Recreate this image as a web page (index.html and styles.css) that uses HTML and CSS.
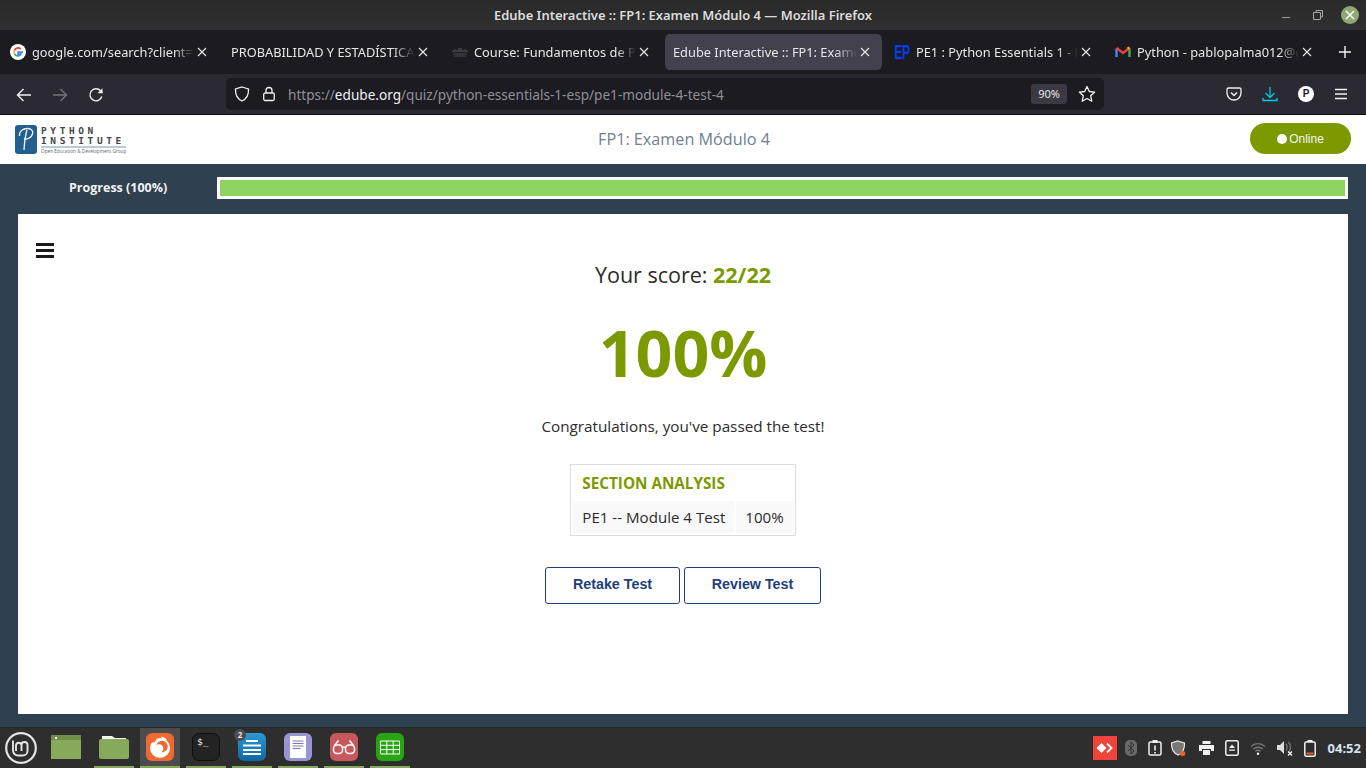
FILE: index.html
```html
<!DOCTYPE html>
<html lang="es">
<head>
    <meta charset="UTF-8">
    <title>Edube Interactive :: FP1: Examen Módulo 4</title>
    <link rel="stylesheet" href="styles.css">
</head>
<body>
    <!-- ventana del navegador -->
    <div class="titlebar">
        <span class="window-title">Edube Interactive :: FP1: Examen Módulo 4 — Mozilla Firefox</span>
        <div class="window-buttons">
            <svg class="win-min" width="10" height="10" viewBox="0 0 10 10"><path d="M1 7.500h8" stroke="#9a9a9a" stroke-width="1"/></svg>
            <svg class="win-max" width="12" height="12" viewBox="0 0 12 12"><path d="M1.500 3.500h7v7h-7zM4 3.500V1.500h6.500v6.500H8.500" fill="none" stroke="#a5a5a5" stroke-width="1"/></svg>
            <div class="win-close"><svg width="12" height="12" viewBox="0 0 12 12"><path d="M2 2l8 8M10 2l-8 8" stroke="#fff" stroke-width="1.500"/></svg></div>
        </div>
    </div>

    <div class="tabbar">
        <div class="tab">
            <svg class="favicon" width="16" height="16" viewBox="0 0 16 16"><circle cx="8" cy="8" r="8" fill="#fff"/><path d="M13 8.200H8.100v1.900h2.800c-.4 1.200-1.500 1.900-2.800 1.900" fill="none" stroke="#4285f4" stroke-width="1.700"/><path d="M8.100 12a4 4 0 0 1-3.700-2.500" fill="none" stroke="#34a853" stroke-width="1.700"/><path d="M4.400 9.500a4 4 0 0 1 0-3" fill="none" stroke="#fbbc05" stroke-width="1.700"/><path d="M4.400 6.500A4 4 0 0 1 10.800 5" fill="none" stroke="#ea4335" stroke-width="1.700"/></svg>
            <span class="tab-title">google.com/search?client=f</span>
            <svg class="tab-close" width="10" height="10" viewBox="0 0 10 10"><path d="M1 1l8 8M9 1l-8 8" stroke="#e8e8e8" stroke-width="1.100"/></svg>
        </div>
        <div class="tab">
            <span class="tab-title">PROBABILIDAD Y ESTADÍSTICA</span>
            <svg class="tab-close" width="10" height="10" viewBox="0 0 10 10"><path d="M1 1l8 8M9 1l-8 8" stroke="#e8e8e8" stroke-width="1.100"/></svg>
        </div>
        <div class="tab">
            <svg class="favicon" width="16" height="16" viewBox="0 0 16 16"><path d="M1 6v2M3 5v3M5 6v2M7 4v4M9 4v4M11 6v2M13 5v3M15 6v2" stroke="#5c5c60" stroke-width="1"/><path d="M1 10h14M2 12h12" stroke="#4c4c50" stroke-width="1.200"/></svg>
            <span class="tab-title">Course: Fundamentos de Py</span>
            <svg class="tab-close" width="10" height="10" viewBox="0 0 10 10"><path d="M1 1l8 8M9 1l-8 8" stroke="#e8e8e8" stroke-width="1.100"/></svg>
        </div>
        <div class="tab tab-active">
            <span class="tab-title">Edube Interactive :: FP1: Exame</span>
            <svg class="tab-close" width="10" height="10" viewBox="0 0 10 10"><path d="M1 1l8 8M9 1l-8 8" stroke="#e8e8e8" stroke-width="1.100"/></svg>
        </div>
        <div class="tab">
            <span class="favicon ep-icon">EP</span>
            <span class="tab-title">PE1 : Python Essentials 1 - M</span>
            <svg class="tab-close" width="10" height="10" viewBox="0 0 10 10"><path d="M1 1l8 8M9 1l-8 8" stroke="#e8e8e8" stroke-width="1.100"/></svg>
        </div>
        <div class="tab">
            <svg class="favicon" width="16" height="16" viewBox="0 0 16 16"><path d="M1.500 13V4.500" stroke="#4285f4" stroke-width="2.500"/><path d="M14.500 13V4.500" stroke="#34a853" stroke-width="2.500"/><path d="M1.500 4l6.500 5 6.500-5" fill="none" stroke="#ea4335" stroke-width="2.500"/><path d="M12.500 4.500l2-1" stroke="#fbbc05" stroke-width="2.500"/></svg>
            <span class="tab-title">Python - pablopalma012@g</span>
            <svg class="tab-close" width="10" height="10" viewBox="0 0 10 10"><path d="M1 1l8 8M9 1l-8 8" stroke="#e8e8e8" stroke-width="1.100"/></svg>
        </div>
        <svg class="new-tab" width="12" height="12" viewBox="0 0 12 12"><path d="M6 0v12M0 6h12" stroke="#f2f2f2" stroke-width="1.400"/></svg>
    </div>

    <div class="navbar">
        <div class="nav-buttons">
            <svg width="16" height="16" viewBox="0 0 16 16"><path d="M15 8H1.500M7.500 2L1.500 8l6 6" fill="none" stroke="#f0f0f0" stroke-width="1.400"/></svg>
            <svg width="16" height="16" viewBox="0 0 16 16"><path d="M1 8h13.500M8.500 2l6 6-6 6" fill="none" stroke="#75747b" stroke-width="1.400"/></svg>
            <svg width="16" height="16" viewBox="0 0 16 16"><path d="M13.800 9.500A6 6 0 1 1 12.500 3.800L14.500 5.800" fill="none" stroke="#f0f0f0" stroke-width="1.400"/><path d="M14.500 1.200v5h-5z" fill="#f0f0f0"/></svg>
        </div>
        <div class="urlbar">
            <svg class="url-icon" width="16" height="16" viewBox="0 0 16 16"><path d="M8 1l6.500 2c.3 5.500-1.800 9.800-6.500 12C3.300 12.800 1.200 8.500 1.500 3z" fill="none" stroke="#f0f0f0" stroke-width="1.300"/></svg>
            <svg class="url-icon" width="14" height="16" viewBox="0 0 14 16"><path d="M4 7V4.500a3 3 0 0 1 6 0V7" fill="none" stroke="#f0f0f0" stroke-width="1.300"/><rect x="1.700" y="7" width="10.600" height="7.500" rx="1.500" fill="none" stroke="#f0f0f0" stroke-width="1.300"/></svg>
            <span class="url-text">https://<span class="url-host">edube.org</span>/quiz/python-essentials-1-esp/pe1-module-4-test-4</span>
            <span class="zoom-badge">90%</span>
            <svg class="url-star" width="18" height="18" viewBox="0 0 18 18"><path d="M9 1.500l2.300 5 5.400.6-4 3.700 1.100 5.400L9 13.500l-4.800 2.700 1.100-5.400-4-3.700 5.400-.6z" fill="none" stroke="#f0f0f0" stroke-width="1.300" stroke-linejoin="round"/></svg>
        </div>
        <div class="nav-tools">
            <svg width="16" height="16" viewBox="0 0 16 16"><path d="M2.500 2h11A1.500 1.500 0 0 1 15 3.500V7a7 7 0 0 1-14 0V3.500A1.500 1.500 0 0 1 2.500 2z" fill="none" stroke="#f0f0f0" stroke-width="1.300"/><path d="M5 6.500l3 3 3-3" fill="none" stroke="#f0f0f0" stroke-width="1.500"/></svg>
            <svg width="16" height="16" viewBox="0 0 16 16"><path d="M8 1v10M3.500 7L8 11.500 12.500 7M1 12v2.500h14V12" fill="none" stroke="#00c8e8" stroke-width="1.300"/></svg>
            <span class="avatar">P</span>
            <svg width="14" height="14" viewBox="0 0 14 14"><path d="M1 2.500h12M1 7h12M1 11.500h12" stroke="#f0f0f0" stroke-width="1.300"/></svg>
        </div>
    </div>

    <!-- pagina -->
    <div class="page">
        <header class="site-header">
            <div class="logo">
                <svg width="22" height="29" viewBox="0 0 22 29"><rect width="22" height="29" rx="3" fill="#23608f"/><path d="M9 25C9.500 17 10.500 10 12 5M4.500 11C4 6 8 3.500 12.500 3.500c4 0 6 2.500 5 5.500-1 3.500-5 5.500-8.500 5" fill="none" stroke="#f2f6fa" stroke-width="1.300"/></svg>
                <div class="logo-text">
                    <span class="logo-line">PYTHON</span>
                    <span class="logo-line logo-line-wide">INSTITUTE</span>
                    <span class="logo-sub">Open Education &amp; Development Group</span>
                </div>
            </div>
            <div class="quiz-title">FP1: Examen Módulo 4</div>
            <div class="online-btn"><span class="online-dot"></span>Online</div>
        </header>

        <div class="progress-row">
            <div class="progress-label">Progress (100%)</div>
            <div class="progress-bar"><div class="progress-fill" style="width: 100%"></div></div>
        </div>

        <main class="result">
            <div class="menu-icon"><span></span><span></span><span></span></div>
            <p class="score">Your score: <strong>22/22</strong></p>
            <p class="percent">100%</p>
            <p class="congrats">Congratulations, you've passed the test!</p>
            <table class="analysis">
                <tr><th colspan="2">SECTION ANALYSIS</th></tr>
                <tr><td>PE1 -- Module 4 Test</td><td>100%</td></tr>
            </table>
            <div class="actions">
                <button class="btn btn-retake">Retake Test</button>
                <button class="btn btn-review">Review Test</button>
            </div>
        </main>
    </div>

    <!-- panel de escritorio -->
    <div class="taskbar">
        <div class="launcher">
            <div class="mint-menu">
                <svg width="32" height="32" viewBox="0 0 32 32"><circle cx="16" cy="16" r="14.800" fill="none" stroke="#e4e4e4" stroke-width="2.200"/><path d="M8 8.500v10a5 5 0 0 0 5 5h5a4.500 4.500 0 0 0 4.500-4.500v-6a3 3 0 0 0-6 0v6M16.500 13a2.800 2.800 0 0 0-5.500 0v6" fill="none" stroke="#e4e4e4" stroke-width="1.900"/></svg>
            </div>
            <div class="slot">
                <svg class="first-folder" width="30" height="24" viewBox="0 0 30 24"><rect width="30" height="24" fill="#87a95b"/><rect width="30" height="5" fill="#6f8f48"/><rect x="4" y="2" width="2" height="2" fill="#fff"/></svg>
            </div>
            <div class="slot slot-open">
                <svg width="30" height="24" viewBox="0 0 30 24"><path d="M3 1h10l3 2h11v6H3z" fill="#f2f2f2"/><rect y="4" width="30" height="20" rx="2" fill="#87a95b"/></svg>
            </div>
            <div class="slot slot-open slot-active">
                <svg width="28" height="28" viewBox="0 0 28 28"><rect width="28" height="28" rx="6" fill="#ee6a32"/><circle cx="14" cy="15" r="10" fill="#fff"/><path d="M3 3h9L8.500 9.500 3 9z" fill="#ee6a32"/><circle cx="16" cy="13.500" r="5.800" fill="#ee6a32"/><circle cx="13" cy="15.500" r="4.300" fill="#fff"/><path d="M15 3.500c2.500.3 5 1.800 6 4l-4.500-1z" fill="#fff"/></svg>
            </div>
            <div class="slot slot-open">
                <div class="app-terminal">$_</div>
            </div>
            <div class="slot slot-open">
                <span class="app-badge">2</span>
                <svg width="28" height="28" viewBox="0 0 28 28"><defs><linearGradient id="notesBg" x1="0" y1="0" x2="0" y2="1"><stop offset="0" stop-color="#2b9ad6"/><stop offset="1" stop-color="#10659f"/></linearGradient></defs><rect width="28" height="28" rx="6" fill="url(#notesBg)"/><path d="M8 8h12M5 12.500h18M5 17h18M5 21h18" stroke="#fff" stroke-width="2"/></svg>
            </div>
            <div class="slot slot-open">
                <svg width="28" height="28" viewBox="0 0 28 28"><rect width="28" height="28" rx="6" fill="#9a94d2"/><rect x="6" y="3" width="16" height="22" fill="#fff"/><path d="M8.500 8h11M8.500 10.500h11M8.500 13h11M8.500 15.500h8" stroke="#7c77b8" stroke-width="1"/></svg>
            </div>
            <div class="slot slot-open">
                <svg width="28" height="28" viewBox="0 0 28 28"><rect width="28" height="28" rx="6" fill="#c7595c"/><rect x="3.500" y="12" width="9" height="8.500" rx="3.500" fill="none" stroke="#fff" stroke-width="1.500"/><rect x="15.500" y="12" width="9" height="8.500" rx="3.500" fill="none" stroke="#fff" stroke-width="1.500"/><path d="M12.500 14.500c1-.8 2-.8 3 0M4.500 12.500l4-5M23.500 12.500l-4-5" fill="none" stroke="#fff" stroke-width="1.500"/></svg>
            </div>
            <div class="slot slot-open">
                <svg width="28" height="28" viewBox="0 0 28 28"><rect width="28" height="28" rx="6" fill="#27a512"/><path d="M4.500 8h19v13h-19zM4.500 12.300h19M4.500 16.600h19M10.800 8v13M17.200 8v13" fill="none" stroke="#fff" stroke-width="1"/></svg>
            </div>
        </div>
        <div class="tray">
            <div class="anydesk"><svg width="18" height="12" viewBox="0 0 18 12"><path d="M5.500 1l5 5-5 5-5-5z" fill="#fff"/><path d="M11 1.500L15.500 6 11 10.500" fill="none" stroke="#fff" stroke-width="1.800"/></svg></div>
            <svg width="12" height="16" viewBox="0 0 12 16"><rect width="12" height="16" rx="5" fill="#6a6a6a"/><path d="M3 5l6 6-3 3V2l3 3-6 6" fill="none" stroke="#2e2e2e" stroke-width="1"/></svg>
            <svg width="14" height="16" viewBox="0 0 14 16"><rect x="1" y="2" width="12" height="13" rx="1.500" fill="none" stroke="#f0f0f0" stroke-width="1.500"/><rect x="4.500" y="0" width="5" height="3" fill="#f0f0f0"/><path d="M7 5.500v5M7 12v1.500" stroke="#f0f0f0" stroke-width="1.600"/></svg>
            <div class="tray-shield"><svg width="16" height="17" viewBox="0 0 16 17"><path d="M8 1l6.500 2c.3 5.500-1.800 9.800-6.500 12C3.300 12.800 1.200 8.500 1.500 3z" fill="#777" stroke="#e8e8e8" stroke-width="1.200"/><circle cx="12.500" cy="13.500" r="2.800" fill="#e0642c"/></svg></div>
            <svg width="15" height="14" viewBox="0 0 15 14"><path d="M3.500 0h8v3h-8zM0 4h15v6h-3V8H3v2H0zM4 9h7v5H4z" fill="#f0f0f0"/></svg>
            <svg width="14" height="16" viewBox="0 0 14 16"><rect x=".8" y=".8" width="12.400" height="14.400" rx="1.500" fill="none" stroke="#f0f0f0" stroke-width="1.500"/><path d="M7 4.500l3 3.500H4zM4 9.500h6v1.200H4z" fill="#f0f0f0"/></svg>
            <svg width="16" height="13" viewBox="0 0 16 13"><path d="M1 4.500a10 10 0 0 1 14 0M3.300 7a7 7 0 0 1 9.400 0M5.500 9.500a3.600 3.600 0 0 1 5 0" fill="none" stroke="#777" stroke-width="1.400"/><circle cx="8" cy="11.700" r="1.300" fill="#f0f0f0"/></svg>
            <svg width="16" height="16" viewBox="0 0 16 16"><path d="M0 5h3l4-4v13L3 10H0z" fill="#ddd"/><path d="M9 4c1.500 1.500 1.500 5 0 6.500M11.500 2c2.500 3 2.500 8 0 10.500" fill="none" stroke="#777" stroke-width="1.300"/><path d="M11 11.500l4 4M15 11.500l-4 4" stroke="#f0f0f0" stroke-width="1.400"/></svg>
            <svg width="12" height="17" viewBox="0 0 12 17"><rect x=".8" y="2" width="10.400" height="14.200" rx="1.500" fill="none" stroke="#f0f0f0" stroke-width="1.500"/><rect x="3.500" y="0" width="5" height="2" fill="#f0f0f0"/><rect x="2.500" y="12.500" width="7" height="2" fill="#d8622b"/></svg>
            <span class="clock">04:52</span>
        </div>
    </div>
</body>
</html>
```

FILE: styles.css
```css
body {
    margin: 0;
    height: 768px;
    overflow: hidden;
    display: flex;
    flex-direction: column;
    background: #2f4050;
    font-family: "Open Sans", sans-serif;
}
svg {
    display: block;
    flex-shrink: 0;
}
p {
    margin: 0;
}

/* barra de titulo */
.titlebar {
    height: 30px;
    flex-shrink: 0;
    position: relative;
    display: flex;
    align-items: center;
    justify-content: center;
    background: linear-gradient(#2a2a2a, #303030);
}
.window-title {
    font-family: "Noto Sans", sans-serif;
    font-size: 12.950px;
    font-weight: 600;
    color: #dcdcdc;
}
.window-buttons {
    position: absolute;
    right: 7px;
    top: 6px;
    display: flex;
    align-items: center;
    gap: 17px;
}
.win-min {
    margin-right: 4px;
}
.win-close {
    width: 18px;
    height: 18px;
    border-radius: 50%;
    background: #8fa876;
    display: flex;
    align-items: center;
    justify-content: center;
}

/* pestanas */
.tabbar {
    height: 44px;
    flex-shrink: 0;
    display: flex;
    align-items: center;
    background: #1c1b22;
    font-family: "Noto Sans", sans-serif;
    font-size: 12.800px;
    color: #e6e6e6;
}
.tab {
    width: 221px;
    height: 36px;
    box-sizing: border-box;
    padding: 0 12px 0 8px;
    display: flex;
    align-items: center;
    gap: 6px;
    border: solid transparent;
    border-width: 0 2px;
    background-clip: padding-box;
    border-radius: 6px;
}
.tab-active {
    background-color: #42414d;
}
.tab-title {
    flex: 1;
    min-width: 0;
    overflow: hidden;
    white-space: nowrap;
    -webkit-mask-image: linear-gradient(to right, #000 88%, transparent 100%);
    mask-image: linear-gradient(to right, #000 88%, transparent 100%);
}
.tab-close {
    margin-left: -3px;
}
.ep-icon {
    width: 16px;
    height: 16px;
    flex-shrink: 0;
    font-family: "Liberation Sans", sans-serif;
    font-size: 20px;
    font-weight: 700;
    line-height: 16px;
    letter-spacing: -1px;
    color: #0b3cf5;
    transform: scaleX(0.62);
    transform-origin: left center;
}
.new-tab {
    margin-left: 13px;
}

/* barra de navegacion */
.navbar {
    height: 40px;
    flex-shrink: 0;
    display: flex;
    align-items: center;
    background: #2b2a33;
    border-bottom: 1px solid #0c0c0d;
}
.nav-buttons {
    width: 226px;
    padding: 2px 0 0 16px;
    box-sizing: border-box;
    display: flex;
    align-items: center;
    gap: 20px;
}
.urlbar {
    width: 878px;
    height: 32px;
    box-sizing: border-box;
    padding: 0 8px;
    display: flex;
    align-items: center;
    background: #1c1b22;
    border-radius: 5px;
    font-family: "Noto Sans", sans-serif;
    font-size: 13.600px;
    color: #8f8f96;
}
.url-icon {
    margin-right: 12px;
}
.url-text {
    flex: 1;
    white-space: nowrap;
    padding-top: 1px;
}
.url-host {
    color: #f0f0f0;
}
.zoom-badge {
    width: 36px;
    height: 20px;
    border-radius: 3px;
    background: #3a3944;
    color: #e6e6e6;
    font-size: 11px;
    line-height: 20px;
    text-align: center;
}
.url-star {
    margin-left: 11px;
}
.nav-tools {
    margin-left: 122px;
    display: flex;
    align-items: center;
    gap: 20px;
}
.avatar {
    width: 16px;
    height: 16px;
    border-radius: 50%;
    background: #fff;
    color: #1c1b22;
    font-family: "Liberation Sans", sans-serif;
    font-size: 10px;
    font-weight: 700;
    line-height: 16px;
    text-align: center;
}

/* pagina */
.page {
    flex: 1;
    min-height: 0;
    display: flex;
    flex-direction: column;
    background: #2f4050;
}
.site-header {
    height: 49px;
    flex-shrink: 0;
    position: relative;
    display: flex;
    align-items: center;
    justify-content: space-between;
    padding: 0 15px;
    background: #fff;
}
.logo {
    display: flex;
    align-items: center;
    gap: 4px;
}
.logo-text {
    display: flex;
    flex-direction: column;
    width: 85px;
    font-family: "DejaVu Sans Mono", monospace;
    color: #454545;
}
.logo-line {
    font-size: 9.500px;
    font-weight: 700;
    line-height: 11px;
    letter-spacing: 3.600px;
    white-space: nowrap;
}
.logo-line-wide {
    line-height: 10px;
    height: 10px;
    border-bottom: 2px solid #b7cbe0;
}
.logo-sub {
    font-family: "Open Sans", sans-serif;
    font-size: 4.700px;
    line-height: 7px;
    white-space: nowrap;
    color: #666;
}
.quiz-title {
    position: absolute;
    left: 0;
    right: 0;
    top: 13px;
    padding-left: 2px;
    text-align: center;
    font-size: 16.200px;
    line-height: 22px;
    color: #708090;
}
.online-btn {
    width: 101px;
    height: 31px;
    display: flex;
    align-items: center;
    justify-content: center;
    gap: 2px;
    border-radius: 16px;
    background: #7c9a00;
    font-family: "Liberation Sans", sans-serif;
    font-size: 12px;
    color: #f4f4f4;
    position: relative;
    top: -1px;
}
.online-dot {
    width: 10px;
    height: 10px;
    border-radius: 50%;
    background: #fff;
}
.progress-row {
    height: 50px;
    flex-shrink: 0;
    display: flex;
    align-items: center;
    padding: 0 18px 3px 0;
    box-sizing: border-box;
}
.progress-label {
    width: 217px;
    box-sizing: border-box;
    padding-left: 69px;
    font-size: 12.500px;
    font-weight: 700;
    color: #f2f2f2;
}
.progress-bar {
    flex: 1;
    height: 22px;
    box-sizing: border-box;
    border: 3px solid #fff;
    background: #fff;
}
.progress-fill {
    height: 100%;
    background: #8dd35f;
}

/* resultado */
.result {
    position: relative;
    height: 500px;
    margin: 0 18px;
    box-sizing: border-box;
    padding-top: 46px;
    display: flex;
    flex-direction: column;
    align-items: center;
    background: #fff;
    color: #2b2b2b;
}
.menu-icon {
    position: absolute;
    left: 18px;
    top: 29px;
    width: 18px;
    display: flex;
    flex-direction: column;
    gap: 3px;
}
.menu-icon span {
    height: 3px;
    background: #1a1a1a;
}
.score {
    font-size: 21.500px;
    line-height: 29px;
}
.score strong {
    color: #7c9a00;
}
.percent {
    margin-top: 19px;
    font-size: 64.500px;
    line-height: 88px;
    font-weight: 700;
    color: #7c9a00;
}
.congrats {
    margin-top: 20px;
    font-size: 15.250px;
    line-height: 20px;
}
.analysis {
    margin-top: 28px;
    border: 1px solid #ddd;
    border-collapse: separate;
    border-spacing: 2px;
    font-size: 15.100px;
}
.analysis th {
    padding: 6px 9px;
    text-align: left;
    font-size: 15.250px;
    line-height: 20px;
    font-weight: 700;
    color: #7c9a00;
}
.analysis td {
    padding: 5px 9px;
    height: 22px;
    line-height: 22px;
    background: #f9f9f9;
}
.actions {
    margin-top: 31px;
    display: flex;
    gap: 4px;
}
.btn {
    height: 37px;
    box-sizing: border-box;
    padding: 0 0 3px;
    background: #fff;
    border: 1px solid #1f3f7a;
    border-radius: 3px;
    font-family: "Liberation Sans", sans-serif;
    font-size: 14.300px;
    font-weight: 700;
    color: #1f3f7a;
}
.btn-retake {
    width: 135px;
}
.btn-review {
    width: 137px;
}

/* panel */
.taskbar {
    height: 41px;
    flex-shrink: 0;
    display: flex;
    align-items: stretch;
    justify-content: space-between;
    background: #2e2e2e;
    border-top: 1px solid #262626;
    box-sizing: border-box;
}
.launcher {
    display: flex;
    gap: 6px;
}
.mint-menu {
    width: 42px;
    box-sizing: border-box;
    display: flex;
    align-items: center;
    justify-content: center;
}
.slot {
    width: 40px;
    position: relative;
    display: flex;
    align-items: center;
    justify-content: center;
    box-sizing: border-box;
    border-bottom: 2px solid transparent;
}
.slot-open {
    border-bottom-color: #87a95b;
}
.slot-active {
    background: #4c4c4c;
}
.first-folder {
    margin-right: 4px;
}
.app-terminal {
    width: 28px;
    height: 28px;
    box-sizing: border-box;
    padding: 2px 4px;
    border-radius: 7px;
    border: 1px solid #0f0f0f;
    background: #232323;
    font-family: "DejaVu Sans Mono", monospace;
    font-size: 9.500px;
    line-height: 11px;
    color: #eee;
}
.app-badge {
    position: absolute;
    left: 2px;
    top: 1px;
    width: 12px;
    height: 12px;
    border-radius: 50%;
    background: #4a4a52;
    color: #e8e8e8;
    font-size: 8px;
    font-weight: 700;
    line-height: 12px;
    text-align: center;
    z-index: 1;
}
.tray {
    display: flex;
    align-items: center;
    gap: 11px;
    padding-right: 5px;
}
.anydesk {
    width: 24px;
    height: 24px;
    margin-right: -3px;
    display: flex;
    align-items: center;
    justify-content: center;
    background: #ef443b;
}
.tray-shield {
    margin: 0 2px 0 -3px;
}
.clock {
    margin-left: 1px;
    font-family: "Noto Sans", sans-serif;
    font-size: 13px;
    font-weight: 700;
    color: #d7e3f0;
}
```
